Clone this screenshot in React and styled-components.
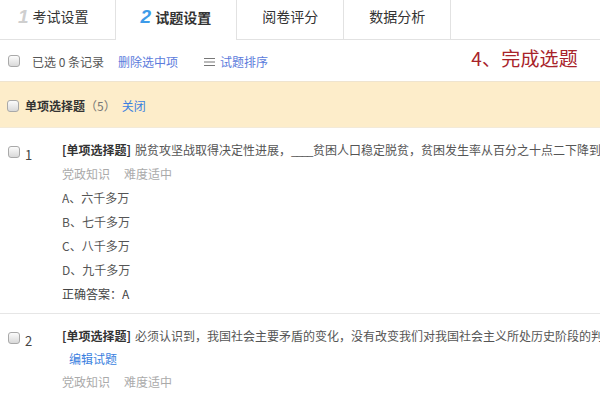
import React from "react";
import styled, { createGlobalStyle } from "styled-components";

const GlobalStyle = createGlobalStyle`
  html, body {
    margin: 0;
    padding: 0;
    background: #fff;
  }
  body {
    font-family: "Noto Sans CJK SC", "Noto Sans", sans-serif;
    color: #333;
    width: 600px;
    overflow: hidden;
  }
`;

const Page = styled.div`
  width: 600px;
  height: 400px;
  overflow: hidden;
`;

const TabBar = styled.div`
  display: flex;
  height: 39px;
  border-bottom: 1px solid #e2e2e2;
`;

const Tab = styled.div`
  display: flex;
  align-items: center;
  gap: 4px;
  height: 39px;
  padding: 0 25px 7px 25px;
  box-sizing: border-box;
  font-size: 14px;
  color: #333;
  font-weight: ${(p) => (p.$active ? 700 : 400)};
  border-right: 1px solid #e2e2e2;
  background: #fff;
  white-space: nowrap;
  ${(p) =>
    p.$active &&
    `
    height: 40px;
    margin-bottom: -1px;
    border-left: 1px solid #e2e2e2;
    margin-left: -1px;
  `}
  &:first-child {
    padding-left: 18px;
    padding-right: 26px;
  }
`;

const StepNo = styled.span`
  font-family: "Liberation Sans", Arial, sans-serif;
  font-style: italic;
  font-weight: 700;
  font-size: 19px;
  line-height: 1;
  color: ${(p) => (p.$active ? "#3d9be9" : "#cfcfcf")};
`;

const Toolbar = styled.div`
  display: flex;
  align-items: center;
  height: 41px;
  padding: 0 22px 0 8px;
  font-size: 12px;
  color: #555;
`;

const Check = styled.span`
  display: inline-block;
  flex: none;
  width: 12px;
  height: 12px;
  box-sizing: border-box;
  border: 1px solid #a9a9a9;
  border-radius: 3px;
  background: linear-gradient(#fcfcfc, #d9d9d9);
`;

const Counter = styled.span`
  margin-left: 12px;
  margin-top: 2px;
`;

const Link = styled.a`
  color: ${(p) => p.$tone || "#3b7fe0"};
  text-decoration: none;
  cursor: pointer;
  margin-left: ${(p) => p.$gap || 0}px;
`;

const DeleteLink = styled(Link)`
  margin-top: 2px;
`;

const SortLink = styled.span`
  display: inline-flex;
  align-items: center;
  gap: 5px;
  margin-left: 26px;
  margin-top: 2px;
  color: #666;
`;

const Finish = styled.div`
  margin-left: auto;
  margin-bottom: 6px;
  font-size: 19px;
  color: #a8232a;
  letter-spacing: 0.2px;
`;

const SectionHeader = styled.div`
  display: flex;
  align-items: center;
  height: 47px;
  padding: 2px 0 0 7px;
  box-sizing: border-box;
  background: #fdedca;
  border-top: 1px solid #efe4cf;
  border-bottom: 1px solid #f3ead8;
  font-size: 12px;
`;

const SectionTitle = styled.span`
  margin-left: 6px;
  font-weight: 700;
  color: #333;
`;

const SectionCount = styled.span`
  color: #777;
  margin-right: 6px;
`;

const Question = styled.div`
  display: flex;
  padding: 10px 0 7px 0;
  border-top: ${(p) => (p.$first ? "none" : "1px solid #e6e6e6")};
  font-size: 12px;
`;

const QuestionIndex = styled.div`
  display: flex;
  align-items: flex-start;
  flex: none;
  width: 54px;
  padding: 8px 0 0 8px;
`;

const IndexNo = styled.span`
  margin-left: 5px;
  margin-top: 2px;
  font-size: 13px;
  line-height: 13px;
  color: #444;
`;

const Body = styled.div`
  flex: 1;
  min-width: 0;
  overflow: hidden;
`;

const Line = styled.div`
  height: ${(p) => p.$h || 24}px;
  line-height: ${(p) => p.$h || 24}px;
  white-space: nowrap;
  color: ${(p) => p.$color || "#555"};
  padding-left: ${(p) => p.$indent || 0}px;
`;

const Tag = styled.span`
  font-weight: 700;
  color: #333;
  margin-right: 4px;
`;

/* fill-in blank inside a question stem */
const Blank = styled.span`
  letter-spacing: -1.5px;
  margin-right: 1px;
`;

const Meta = styled.span`
  color: #aaa;
  & + & {
    margin-left: 14px;
  }
`;

const SortIcon = () => (
  <svg width="11" height="10" viewBox="0 0 11 10" aria-hidden="true">
    <path d="M0 1.5h11M0 5h11M0 8.5h11" stroke="#777" strokeWidth="1.2" />
  </svg>
);

const tabs = [
  { no: "1", label: "考试设置" },
  { no: "2", label: "试题设置", active: true },
  { label: "阅卷评分" },
  { label: "数据分析" },
];

const questions = [
  {
    id: 1,
    stem: [
      "脱贫攻坚战取得决定性进展，",
      "____",
      "贫困人口稳定脱贫，贫困发生率从百分之十点二下降到百分之四以下。",
    ],
    options: ["A、六千多万", "B、七千多万", "C、八千多万", "D、九千多万"],
    answer: "正确答案：A",
  },
  {
    id: 2,
    stem: [
      "必须认识到，我国社会主要矛盾的变化，没有改变我们对我国社会主义所处历史阶段的判断，我国仍处于并将长期处于社会主义初级阶段。",
    ],
    edit: true,
  },
];

export default function App() {
  return (
    <Page>
      <GlobalStyle />
      <TabBar>
        {tabs.map((t) => (
          <Tab key={t.label} $active={t.active}>
            {t.no && <StepNo $active={t.active}>{t.no}</StepNo>}
            {t.label}
          </Tab>
        ))}
      </TabBar>

      <Toolbar>
        <Check />
        <Counter>已选 0 条记录</Counter>
        <DeleteLink $gap={14} $tone="#5b7bdc">
          删除选中项
        </DeleteLink>
        <SortLink>
          <SortIcon />
          <Link $tone="#5b7bdc">试题排序</Link>
        </SortLink>
        <Finish>4、完成选题</Finish>
      </Toolbar>

      <SectionHeader>
        <Check />
        <SectionTitle>单项选择题</SectionTitle>
        <SectionCount>（5）</SectionCount>
        <Link>关闭</Link>
      </SectionHeader>

      {questions.map((q, i) => (
        <Question key={q.id} $first={i === 0}>
          <QuestionIndex>
            <Check />
            <IndexNo>{q.id}</IndexNo>
          </QuestionIndex>
          <Body>
            <Line>
              <Tag>[单项选择题]</Tag>
              {q.stem.map((part, k) =>
                /^_+$/.test(part) ? <Blank key={k}>{part}</Blank> : part
              )}
            </Line>
            {q.edit && (
              <Line $h={22} $indent={7}>
                <Link>编辑试题</Link>
              </Line>
            )}
            <Line>
              <Meta>党政知识</Meta>
              <Meta>难度适中</Meta>
            </Line>
            {q.options && q.options.map((o) => <Line key={o}>{o}</Line>)}
            {q.answer && <Line $color="#444">{q.answer}</Line>}
          </Body>
        </Question>
      ))}
    </Page>
  );
}
